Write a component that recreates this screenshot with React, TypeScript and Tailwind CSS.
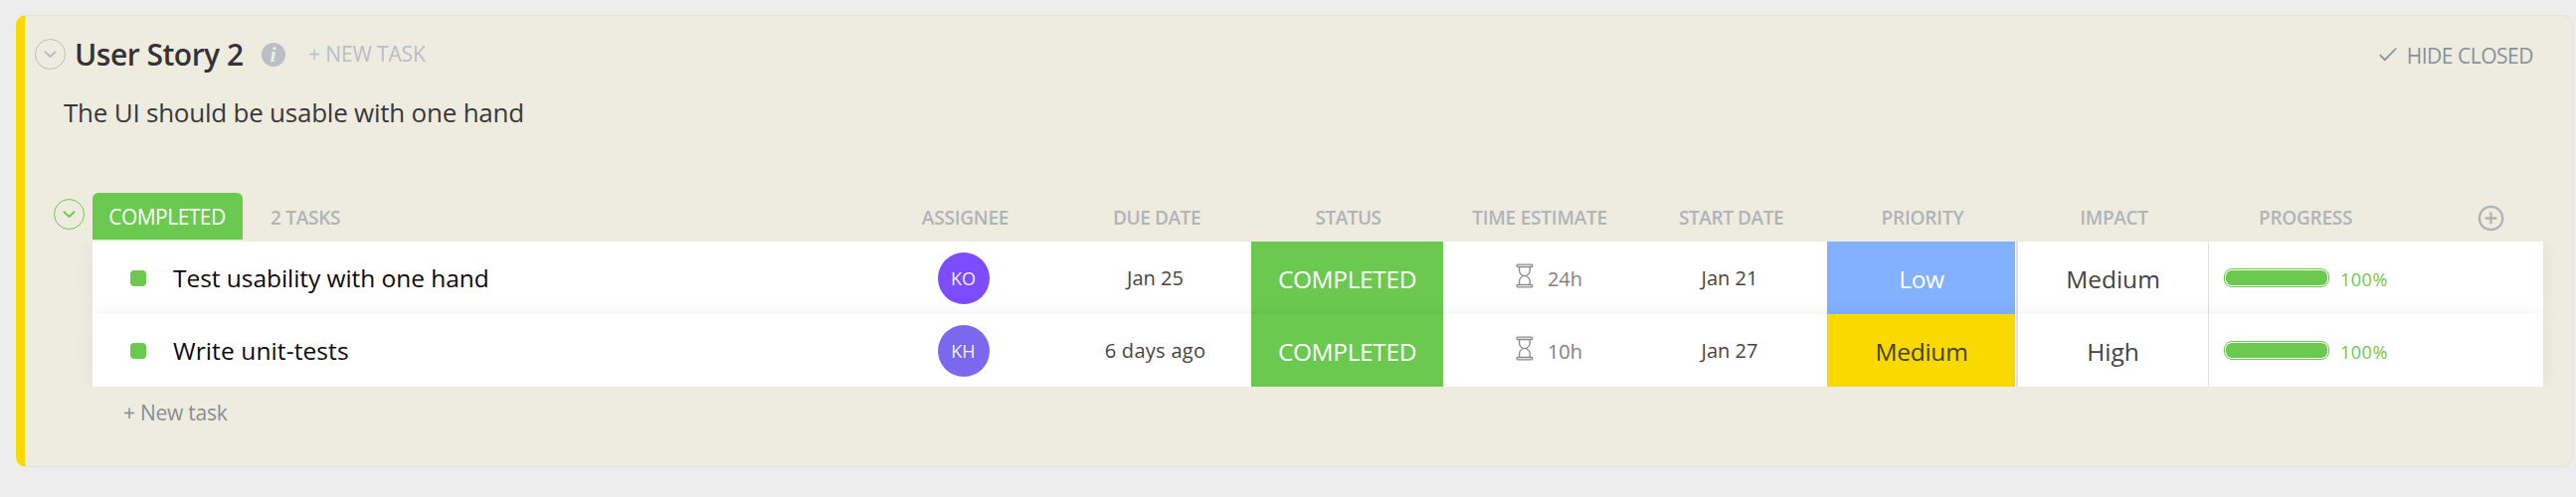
function Chevron({ className }: { className: string }) {
  return (
    <svg className={className} width="31" height="31" viewBox="0 0 31 31" fill="none" stroke="currentColor">
      <circle cx="15.5" cy="15.5" r="15" strokeWidth="1" />
      <path d="M10.5 13.2l5 4.8 5-4.8" strokeWidth="2" strokeLinecap="round" strokeLinejoin="round" />
    </svg>
  );
}

function Hourglass() {
  return (
    <svg width="18" height="25" viewBox="0 0 18 25" fill="none" stroke="#8a8a8a" strokeWidth="1.3" className="mb-[5px] shrink-0">
      <rect x="1" y="1.2" width="15.8" height="2.3" rx="1" />
      <rect x="1" y="21.5" width="15.8" height="2.3" rx="1" />
      <path d="M3.6 3.500v3.700c0 3.200 2 4.300 4.100 5.300-2.100 1-4.100 2.100-4.100 5.300v3.700M14.200 3.500v3.700c0 3.200-2 4.300-4.100 5.300 2.100 1 4.100 2.100 4.100 5.300v3.700" />
      <path d="M7.700 12.500h2.400" />
    </svg>
  );
}

const headers = [
  { label: "ASSIGNEE", track: "tracking-[-0.22px]" },
  { label: "DUE DATE", track: "tracking-[-0.4px]" },
  { label: "STATUS", track: "tracking-[-0.52px]" },
  { label: "TIME ESTIMATE", track: "tracking-[-0.21px]" },
  { label: "START DATE", track: "tracking-[-0.42px]" },
  { label: "PRIORITY", track: "tracking-[-0.18px]" },
  { label: "IMPACT", track: "tracking-[-0.32px]" },
  { label: "PROGRESS", track: "tracking-[-0.25px]" },
];

const rows = [
  {
    name: "Test usability with one hand",
    nameTrack: "tracking-[-0.05px]",
    initials: "KO",
    avatar: "bg-[#7c4dff]",
    due: "Jan 25",
    dueTrack: "",
    estimate: "24h",
    start: "Jan 21",
    priority: "Low",
    priorityStyle: "bg-[#81b1ff] text-white tracking-[-0.3px]",
    impact: "Medium",
  },
  {
    name: "Write unit-tests",
    nameTrack: "tracking-[0.1px]",
    initials: "KH",
    avatar: "bg-[#7b68ee]",
    due: "6 days ago",
    dueTrack: "tracking-[0.3px]",
    estimate: "10h",
    start: "Jan 27",
    priority: "Medium",
    priorityStyle: "bg-[#f9d900] text-[#46421f] tracking-[-0.25px]",
    impact: "High",
  },
];

export default function App() {
  return (
    <div className="h-[500px] w-[2590px] overflow-hidden bg-[#ededed] pl-4 pt-[15px] font-['Open_Sans','Noto_Sans',sans-serif] leading-none whitespace-nowrap">
      <div className="h-[455px] w-[2571px] rounded-[10px] border border-l-[9px] border-[#e1e4dc] border-l-[#f9d900] bg-[#eeecdf]">
        <div className="flex h-[77px] items-center pl-[10px]">
          <Chevron className="text-[#b9bec7]" />
          <span className="ml-[9px] w-[188px] pt-px text-[30px] font-semibold tracking-[-0.49px] text-[#343238]">User Story 2</span>
          <span className="flex size-6 items-center justify-center rounded-full bg-[#b9bec7] pr-px font-['Liberation_Serif',serif] text-[22px] font-bold italic text-[#eeecdf]">i</span>
          <span className="ml-[23px] text-[21px] tracking-[-0.13px] text-[#b9bec7]">+ NEW TASK</span>
          <svg className="ml-auto mr-[10px]" width="18" height="15" viewBox="0 0 18 15" fill="none" stroke="#87909e" strokeWidth="1.7">
            <path d="M.8 8.200l5 5L17.300 1.500" />
          </svg>
          <span className="mr-[39px] pt-[3px] text-[21px] tracking-[-0.48px] text-[#87909e]">HIDE CLOSED</span>
        </div>
        <div className="h-[101px] pl-[39px] pt-[7px] text-[26px] tracking-[-0.23px] text-[#38393c]">The UI should be usable with one hand</div>
        <div className="flex h-[49px] pl-[29px]">
          <Chevron className="mt-[6px] text-[#6bc950]" />
          <div className="ml-2 flex h-[47px] w-[151px] items-center justify-center rounded-t-md bg-[#6bc950] pt-px pr-px text-[21px] tracking-[-0.52px] text-white">COMPLETED</div>
          <div className="flex w-[630.3px] items-center pl-[28px] pt-px text-[19px] font-semibold tracking-[-0.28px] text-[#b0b4ba]">2 TASKS</div>
          {headers.map((h) => (
            <div key={h.label} className={`flex w-[192.5px] items-center justify-center pt-px text-[19px] font-semibold text-[#b0b4ba] ${h.track}`}>{h.label}</div>
          ))}
          <svg className="ml-[77px] mt-[12px]" width="27" height="27" viewBox="0 0 27 27" fill="none" stroke="#b0b4ba" strokeWidth="2.3" strokeLinecap="round">
            <circle cx="13.5" cy="13.5" r="11.7" />
            <path d="M13.500 8.500v10M8.500 13.500h10" />
          </svg>
        </div>
        <div className="ml-[68px] w-[2464px] [clip-path:inset(0_-24px)]">
          {rows.map((r) => (
            <div key={r.name} className="relative flex h-[73px] items-center bg-white text-[20px] text-[#444444] shadow-[0_0_20px_rgba(0,0,0,0.06)]">
              <div className="flex w-[779px] items-center pl-[38px]">
                <span className="size-4 rounded bg-[#6bc950]" />
                <span className={`pl-[27px] pt-[2px] text-[24.5px] text-[#0a0a0a] ${r.nameTrack}`}>{r.name}</span>
              </div>
              <div className="flex w-[193px] justify-center">
                <span className={`flex size-[52px] items-center justify-center rounded-full pt-px text-[18px] text-white/90 ${r.avatar}`}>{r.initials}</span>
              </div>
              <div className={`flex w-[193px] justify-center ${r.dueTrack}`}>{r.due}</div>
              <div className="flex h-full w-[193px] items-center justify-center bg-[#6bc950] pt-[3px] text-[24.5px] tracking-[-0.37px] text-white">COMPLETED</div>
              <div className="flex w-[193px] items-center justify-center gap-[14px] pl-[20px] text-[#808080]">
                <Hourglass />
                <span className="pt-[2px]">{r.estimate}</span>
              </div>
              <div className="flex w-[193px] justify-center pr-[3px]">{r.start}</div>
              <div className={`flex h-full w-[189px] items-center justify-center pl-px pt-[3px] text-[24.5px] ${r.priorityStyle}`}>{r.priority}</div>
              <div className="ml-px flex h-full w-[194px] items-center justify-center border-l-2 border-r border-[#dfe2e2] pt-[3px] text-[24.5px]">{r.impact}</div>
              <div className="flex items-center pl-[15px] text-[18px] text-[#6bc950]">
                <div className="h-[19px] w-[106px] rounded-[8px] border border-[#6bc950] p-px">
                  <div className="h-full w-full rounded-[6px] bg-[#6bc950]" />
                </div>
                <span className="ml-[11px] pt-[2px] tracking-[0.5px]">100%</span>
              </div>
            </div>
          ))}
        </div>
        <div className="pl-[99px] pt-[16px] text-[21px] tracking-[-0.25px] text-[#8a8d92]">+ New task</div>
      </div>
    </div>
  );
}
